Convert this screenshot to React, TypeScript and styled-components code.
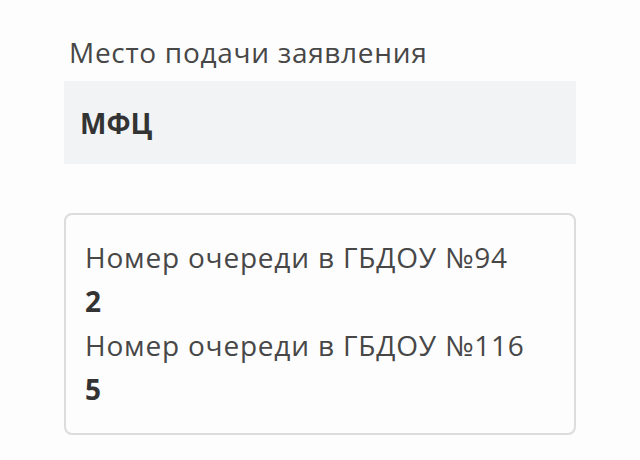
import React from "react";
import styled, { createGlobalStyle } from "styled-components";

const GlobalStyle = createGlobalStyle`
  html, body {
    margin: 0;
    padding: 0;
    background: #fdfdfd;
  }
  body {
    font-family: "Open Sans", "Noto Sans", sans-serif;
    color: #444;
  }
`;

const Page = styled.div`
  width: 512px;
  padding: 33px 64px 0;
`;

const FieldLabel = styled.div`
  font-size: 28px;
  line-height: 38px;
  letter-spacing: 0.7px;
  padding-left: 5px;
  color: #474747;
  margin-bottom: 10px;
`;

const ValueBox = styled.div`
  background: #f2f3f5;
  height: 83px;
  display: flex;
  align-items: center;
  padding: 0 16px;
  font-size: 28px;
  font-weight: 700;
  color: #333;
`;

const QueueCard = styled.div`
  margin-top: 49px;
  border: 2px solid #dcdcdc;
  border-radius: 8px;
  padding: 20px 19px 22px;
`;

const QueueLabel = styled.div`
  font-size: 28px;
  line-height: 44px;
  letter-spacing: 0.8px;
  color: #474747;
`;

const QueueNumber = styled.div`
  font-size: 28px;
  line-height: 44px;
  font-weight: 700;
  color: #333;
`;

const queues = [
  { school: "ГБДОУ №94", position: 2 },
  { school: "ГБДОУ №116", position: 5 },
];

export default function App() {
  return (
    <>
      <GlobalStyle />
      <Page>
        <FieldLabel>Место подачи заявления</FieldLabel>
        <ValueBox>МФЦ</ValueBox>
        <QueueCard>
          {queues.map((q) => (
            <React.Fragment key={q.school}>
              <QueueLabel>Номер очереди в {q.school}</QueueLabel>
              <QueueNumber>{q.position}</QueueNumber>
            </React.Fragment>
          ))}
        </QueueCard>
      </Page>
    </>
  );
}
